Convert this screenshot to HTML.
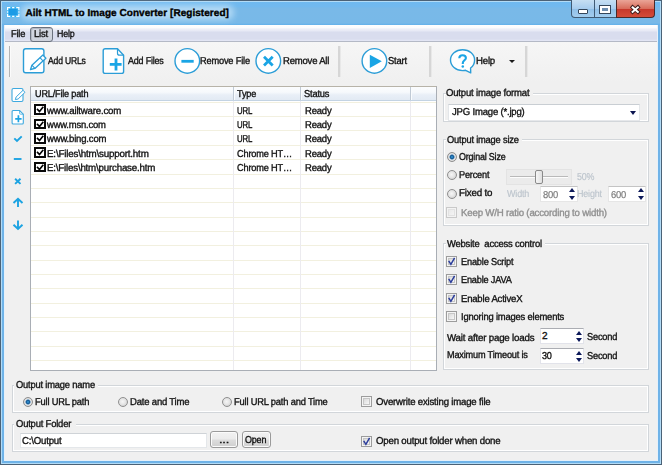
<!DOCTYPE html>
<html><head><meta charset="utf-8">
<style>
*{box-sizing:border-box}
html,body{margin:0;padding:0}
body{width:662px;height:465px;overflow:hidden;position:relative;background:#f0f0f0;font-family:"Liberation Sans",sans-serif;font-size:10px;color:#000}
.a{position:absolute}
.t{position:absolute;white-space:nowrap;line-height:12px;font-size:10px;color:#111;letter-spacing:-0.2px;transform-origin:0 0;-webkit-text-stroke:0.35px currentColor;text-rendering:geometricPrecision}
.g{position:absolute;border:1px solid #d2d6da;box-shadow:inset 1px 1px 0 #fff,inset -1px -1px 0 #fff}
.gb{position:absolute;background:#f0f0f0;height:3px}
.cb{position:absolute;width:11px;height:11px;border:1px solid #9c9c9c;background:#f4f4f4}
.cb i{position:absolute;left:1px;top:1px;right:1px;bottom:1px;border:1px solid #c6c6c6;background:linear-gradient(135deg,#dadada,#f7f7f7)}
.rd{position:absolute;width:10px;height:10px;border-radius:50%;border:1px solid #8f8f8f;background:radial-gradient(circle at 45% 45%,#f6f6f6 0,#e4e4e4 3px,#cfcfcf 5px)}
.rdo{background:radial-gradient(circle at 50% 50%,#4ab4ec 0,#1f78b8 0.9px,#17558f 1.8px,#5f93bd 2.3px,#d6dde3 2.9px,#e6e6e6 3.4px,#c4c4c4 4.2px)}
.grey{color:#8d8d8d}
.lgrey{color:#b3bcc6}
.ed{position:absolute;background:#fff;border:1px solid #e2e3ea;border-top-color:#abadb3}
.sp{position:absolute;width:0;height:0;border-left:3.5px solid transparent;border-right:3.5px solid transparent}
.spu{border-bottom:4px solid #0d1a5a}
.spd{border-top:4px solid #0d1a5a}
.btn{position:absolute;border:1px solid #9a9a9a;border-radius:3px;background:linear-gradient(#f2f2f2 0%,#ebebeb 48%,#dddddd 52%,#cfcfcf 100%);box-shadow:inset 0 0 0 1px #fbfbfb}
</style></head><body>
<div class="a" style="left:0;top:0;width:662px;height:465px;background:#6fb3e8;border:1px solid #4b6277"></div>
<div class="a" style="left:1px;top:1px;width:660px;height:463px;border:1px solid #b2dbf6"></div>
<div class="a" style="left:2px;top:2px;width:658px;height:23px;background:linear-gradient(#6fb9f0 0px,#72b9ee 5px,#79b9e8 6px,#78b9e8 21px,#62b0ea 23px)"></div>
<div class="a" style="left:4px;top:25px;width:654px;height:436px;background:#f0f0f0;border:1px solid #e6f1fa;border-top:none"></div>
<svg class="a" style="left:6px;top:6px" width="15" height="12" viewBox="0 0 15 12"><rect x="0.5" y="0.5" width="13.5" height="11" rx="2" fill="#35aef0" stroke="#68bff0"/><rect x="3" y="3" width="8.5" height="6" fill="#1a9be6"/><path d="M1.6 4.3 V1.6 H4.3 M6.1 1.6 H8.4 M10.2 1.6 H12.9 V4.3 M12.9 5.2 V6.8 M12.9 7.7 V10.4 H10.2 M8.4 10.4 H6.1 M4.3 10.4 H1.6 V7.7 M1.6 6.8 V5.2" fill="none" stroke="#fff" stroke-width="1.2"/></svg>
<div class="a" style="left:21px;top:5px;width:213px;height:15px;border-radius:7px;background:rgba(196,228,250,0.75);filter:blur(3px)"></div>
<div class="t" style="left:25.40px;top:8px;letter-spacing:0.05px;font-weight:bold;color:#000">Ailt HTML to Image Converter [Registered]</div>
<div class="a" style="left:571px;top:0;width:24px;height:18px;border:1px solid #3f5a74;border-top:none;border-radius:0 0 0 4px;background:linear-gradient(#c6dff3,#a8cdee 50%,#8fbfe7 51%,#a3cdee)"></div>
<div class="a" style="left:594px;top:0;width:23px;height:18px;border:1px solid #3f5a74;border-top:none;background:linear-gradient(#c6dff3,#a8cdee 50%,#8fbfe7 51%,#a3cdee)"></div>
<div class="a" style="left:616px;top:0;width:39px;height:18px;border:1px solid #4a2a2a;border-top:none;border-radius:0 0 4px 0;background:linear-gradient(#eaa597,#d86d5c 50%,#c5372a 51%,#d44c38)"></div>
<div class="a" style="left:578px;top:9px;width:10px;height:5px;background:#fff;border:1px solid #34465a;border-radius:1px"></div>
<div class="a" style="left:599px;top:5px;width:12px;height:9px;border:1px solid #34465a;background:#34465a"><div class="a" style="left:0;top:0;width:10px;height:7px;border:2px solid #fff;border-top-width:2px;background:#6f8fb0"></div></div>
<svg class="a" style="left:629px;top:4px" width="13" height="11" viewBox="0 0 13 11"><path d="M3.6 3.3 L8.9 7.9 M8.9 3.3 L3.6 7.9" stroke="#3a1a1a" stroke-width="3.8" stroke-linecap="square"/><path d="M3.6 3.3 L8.9 7.9 M8.9 3.3 L3.6 7.9" stroke="#fff" stroke-width="2.0" stroke-linecap="square"/></svg>
<div class="a" style="left:5px;top:25px;width:652px;height:17px;background:linear-gradient(#fefefe 0px,#fbfcfd 2.5px,#eef0f8 4px,#e6e9f5 6px,#d9ddee 7px,#d9ddee 14px,#e2e5f4 15.5px);border-bottom:1px solid #b4b9c6"></div>
<div class="a" style="left:30px;top:27px;width:23px;height:15px;border:1px solid #6b727e;border-radius:3px;background:linear-gradient(#d6dae3,#cdd2dc);box-shadow:inset 1px 1px 0 #b4b9c3"></div>
<div class="t" style="left:10.95px;top:29px;transform:scaleX(0.929);">File</div>
<div class="t" style="left:33.65px;top:29px;transform:scaleX(0.950);">List</div>
<div class="t" style="left:56.65px;top:29px;transform:scaleX(0.889);">Help</div>
<div class="a" style="left:5px;top:42px;width:652px;height:40px;background:linear-gradient(#f6f6f6,#f0f0f0)"></div>
<div class="a" style="left:9px;top:46px;width:1px;height:31px;background:#b4b4b4;box-shadow:1px 0 0 #fbfbfb"></div>
<div class="a" style="left:337.6px;top:46px;width:2px;height:31px;background:#d6d6d6;box-shadow:1px 0 0 #e8e8e8"></div>
<div class="a" style="left:429px;top:46px;width:2px;height:31px;background:#d6d6d6;box-shadow:1px 0 0 #e8e8e8"></div>
<div class="a" style="left:525px;top:46px;width:2px;height:31px;background:#d6d6d6;box-shadow:1px 0 0 #e8e8e8"></div>
<svg class="a" style="left:20px;top:45px" width="30" height="32" viewBox="0 0 30 32">
<rect x="3.5" y="3.8" width="20.4" height="24" rx="2.2" fill="#fff" stroke="#2b9dd7" stroke-width="1.4"/>
<path d="M10.5 24.5 L11.9 20.2 L22.9 10.0 L25.9 13.2 L14.9 23.4 Z" fill="#fff" stroke="#2b9dd7" stroke-width="1.3" stroke-linejoin="round"/>
<path d="M19.95 12.7 L22.95 15.9 M11.9 20.2 L14.9 23.4" stroke="#2b9dd7" stroke-width="1.1"/>
</svg>
<div class="t" style="left:47.85px;top:56px;transform:scaleX(0.857);">Add URLs</div>
<svg class="a" style="left:98px;top:45px" width="30" height="32" viewBox="0 0 30 32">
<path d="M7.2 3.8 H19.5 L25.6 10.2 V26.4 A2 2 0 0 1 23.6 28.4 H7.2 A2 2 0 0 1 5.2 26.4 V5.8 A2 2 0 0 1 7.2 3.8 Z" fill="#fff" stroke="#2b9dd7" stroke-width="1.4" stroke-linejoin="round"/>
<path d="M19.5 3.8 V8.2 A2 2 0 0 0 21.5 10.2 H25.6" fill="none" stroke="#2b9dd7" stroke-width="1.2"/>
<path d="M11.8 19.4 H23.6 M18 13.4 V25.4" stroke="#1aa5e5" stroke-width="2.8"/>
</svg>
<div class="t" style="left:128.35px;top:56px;transform:scaleX(0.893);">Add Files</div>
<svg class="a" style="left:170px;top:45px" width="34" height="32" viewBox="0 0 34 32">
<circle cx="17.3" cy="15.9" r="12.3" fill="#fff" stroke="#2b9dd7" stroke-width="1.4"/>
<path d="M11.4 16.3 H23.7" stroke="#1aa5e5" stroke-width="2.8"/>
</svg>
<div class="t" style="left:200.35px;top:56px;transform:scaleX(0.925);">Remove File</div>
<svg class="a" style="left:252px;top:45px" width="34" height="32" viewBox="0 0 34 32">
<circle cx="16.3" cy="15.9" r="12.3" fill="#fff" stroke="#2b9dd7" stroke-width="1.4"/>
<path d="M12 11.8 L20.7 20.4 M20.7 11.8 L12 20.4" stroke="#1aa5e5" stroke-width="2.8"/>
</svg>
<div class="t" style="left:282.55px;top:56px;transform:scaleX(0.951);">Remove All</div>
<svg class="a" style="left:357px;top:45px" width="34" height="32" viewBox="0 0 34 32">
<circle cx="17.4" cy="15.9" r="12.3" fill="#fff" stroke="#2b9dd7" stroke-width="1.4"/>
<path d="M12.8 9.7 L24.8 16.3 L12.8 23 Z" fill="#1aa5e5"/>
</svg>
<div class="t" style="left:387.65px;top:56px;transform:scaleX(0.938);">Start</div>
<svg class="a" style="left:445px;top:45px" width="34" height="32" viewBox="0 0 34 32">
<path d="M17.6 4.8 C24.5 4.8 29.6 9.4 29.6 15 C29.6 18.5 27.9 21.3 25.6 23 L25.7 27.9 L20.6 25.3 C19.6 25.5 18.6 25.6 17.6 25.6 C10.8 25.6 5.5 20.9 5.5 15 C5.5 9.4 10.8 4.8 17.6 4.8 Z" fill="#fff" stroke="#2b9dd7" stroke-width="1.4" stroke-linejoin="round"/>
<path d="M14.3 13.3 C14.3 11.2 15.9 10.2 17.6 10.2 C19.6 10.2 20.9 11.4 20.9 13 C20.9 15.1 17.8 15.6 17.8 18.1 V19.1" fill="none" stroke="#1aa5e5" stroke-width="2.1"/>
<circle cx="17.8" cy="21.5" r="1.25" fill="#1aa5e5"/>
</svg>
<div class="t" style="left:476.35px;top:56px;transform:scaleX(0.963);">Help</div>
<div class="a" style="left:509px;top:60px;width:0;height:0;border-left:3px solid transparent;border-right:3px solid transparent;border-top:3px solid #1a1a1a"></div>
<svg class="a" style="left:8px;top:84px" width="20" height="150" viewBox="0 0 20 150">
<rect x="4" y="4.5" width="11" height="13" rx="1.5" fill="#fff" stroke="#3ea9df" stroke-width="1.1"/>
<path d="M7.3 15.6 L8.1 13 L15 6.3 L17 8.3 L10.1 15 Z" fill="#fff" stroke="#3ea9df" stroke-width="1" stroke-linejoin="round"/>
<path d="M5.1 26.5 H11.6 L15.3 30.2 V39 A1 1 0 0 1 14.3 40 H5.1 A1 1 0 0 1 4.1 39 V27.5 A1 1 0 0 1 5.1 26.5 Z" fill="#fff" stroke="#3ea9df" stroke-width="1.1"/>
<path d="M11.6 26.5 V29.2 A1 1 0 0 0 12.6 30.2 H15.3" fill="none" stroke="#3ea9df" stroke-width="0.8"/>
<path d="M7.2 34.8 H13.6 M10.4 31.2 V38.2" stroke="#1ca3e2" stroke-width="1.7"/>
<path d="M6.3 54.3 L9 57 L13.7 52.4" fill="none" stroke="#1ca3e2" stroke-width="1.9"/>
<path d="M5.8 75 H13.5" stroke="#1ca3e2" stroke-width="1.9"/>
<path d="M7.1 94.7 L12.5 99.9 M12.5 94.7 L7.1 99.9" stroke="#1ca3e2" stroke-width="1.9"/>
<path d="M5.5 119 L10 114.8 L14.5 119 M10 115 V123" fill="none" stroke="#1ca3e2" stroke-width="1.9"/>
<path d="M5.5 140.7 L10 145 L14.5 140.7 M10 145 V136.6" fill="none" stroke="#1ca3e2" stroke-width="1.9"/>
</svg>
<div class="a" style="left:30px;top:86px;width:407px;height:285px;background:#fff;border:1px solid #a9aeb5;border-top-color:#b7b3a8"></div>
<div class="a" style="left:31px;top:87px;width:405px;height:14px;background:linear-gradient(#fbfcfe 0%,#f6f9fc 40%,#e9eff7 60%,#e2eaf4 100%);border-bottom:1px solid #c3d3e3"></div>
<div class="a" style="left:233px;top:87px;width:1px;height:13px;background:#c0cad5;box-shadow:1px 0 0 #fafcfe"></div>
<div class="a" style="left:300px;top:87px;width:1px;height:13px;background:#c0cad5;box-shadow:1px 0 0 #fafcfe"></div>
<div class="a" style="left:410px;top:87px;width:1px;height:13px;background:#c0cad5;box-shadow:1px 0 0 #fafcfe"></div>
<div class="t" style="left:34.65px;top:89px;transform:scaleX(0.910);">URL/File path</div>
<div class="t" style="left:237.45px;top:89px;transform:scaleX(0.914);">Type</div>
<div class="t" style="left:304.25px;top:89px;transform:scaleX(0.933);">Status</div>
<div class="a" style="left:31px;top:101px;width:405px;height:269px;overflow:hidden;
background:
linear-gradient(90deg,transparent 202px,#ecebef 202px,#ecebef 203px,transparent 203px,transparent 269px,#ecebef 269px,#ecebef 270px,transparent 270px,transparent 379px,#ecebef 379px,#ecebef 380px,transparent 380px),
repeating-linear-gradient(180deg,transparent 0px,transparent 0.8px,#f2f0df 0.8px,#f2f0df 1.8px,transparent 1.8px,transparent 14.35px);"></div>
<div class="a" style="left:34.4px;top:104.40px;width:11.2px;height:10.5px;border:2px solid #0a0a0a;background:#fff"></div>
<svg class="a" style="left:34.3px;top:104.40px" width="12" height="11" viewBox="0 0 12 11"><path d="M3 4.9 L5.5 7.6 L9.3 2.8" fill="none" stroke="#000" stroke-width="1.6"/></svg>
<div class="t" style="left:47.45px;top:106px;transform:scaleX(0.965);">www.ailtware.com</div>
<div class="t" style="left:237.45px;top:106px;transform:scaleX(0.785);">URL</div>
<div class="t" style="left:305.15px;top:106px;transform:scaleX(0.948);">Ready</div>
<div class="a" style="left:34.4px;top:118.75px;width:11.2px;height:10.5px;border:2px solid #0a0a0a;background:#fff"></div>
<svg class="a" style="left:34.3px;top:118.75px" width="12" height="11" viewBox="0 0 12 11"><path d="M3 4.9 L5.5 7.6 L9.3 2.8" fill="none" stroke="#000" stroke-width="1.6"/></svg>
<div class="t" style="left:47.45px;top:120px;transform:scaleX(0.944);">www.msn.com</div>
<div class="t" style="left:237.45px;top:120px;transform:scaleX(0.785);">URL</div>
<div class="t" style="left:305.15px;top:120px;transform:scaleX(0.948);">Ready</div>
<div class="a" style="left:34.4px;top:133.10px;width:11.2px;height:10.5px;border:2px solid #0a0a0a;background:#fff"></div>
<svg class="a" style="left:34.3px;top:133.10px" width="12" height="11" viewBox="0 0 12 11"><path d="M3 4.9 L5.5 7.6 L9.3 2.8" fill="none" stroke="#000" stroke-width="1.6"/></svg>
<div class="t" style="left:47.45px;top:134px;transform:scaleX(0.955);">www.bing.com</div>
<div class="t" style="left:237.45px;top:134px;transform:scaleX(0.785);">URL</div>
<div class="t" style="left:305.15px;top:134px;transform:scaleX(0.948);">Ready</div>
<div class="a" style="left:34.4px;top:147.45px;width:11.2px;height:10.5px;border:2px solid #0a0a0a;background:#fff"></div>
<svg class="a" style="left:34.3px;top:147.45px" width="12" height="11" viewBox="0 0 12 11"><path d="M3 4.9 L5.5 7.6 L9.3 2.8" fill="none" stroke="#000" stroke-width="1.6"/></svg>
<div class="t" style="left:47.45px;top:149px;transform:scaleX(0.981);">E:\Files\htm\support.htm</div>
<div class="t" style="left:237.45px;top:149px;transform:scaleX(0.920);">Chrome HT&hellip;</div>
<div class="t" style="left:305.15px;top:149px;transform:scaleX(0.948);">Ready</div>
<div class="a" style="left:34.4px;top:161.80px;width:11.2px;height:10.5px;border:2px solid #0a0a0a;background:#fff"></div>
<svg class="a" style="left:34.3px;top:161.80px" width="12" height="11" viewBox="0 0 12 11"><path d="M3 4.9 L5.5 7.6 L9.3 2.8" fill="none" stroke="#000" stroke-width="1.6"/></svg>
<div class="t" style="left:47.45px;top:163px;transform:scaleX(0.973);">E:\Files\htm\purchase.htm</div>
<div class="t" style="left:237.45px;top:163px;transform:scaleX(0.920);">Chrome HT&hellip;</div>
<div class="t" style="left:305.15px;top:163px;transform:scaleX(0.948);">Ready</div>
<div class="g" style="left:443px;top:93px;width:206px;height:29px"></div>
<div class="gb" style="left:446px;top:92px;width:87px"></div>
<div class="t" style="left:446.25px;top:88px;transform:scaleX(0.955);">Output image format</div>
<div class="ed" style="left:448px;top:104px;width:192px;height:17px;border-color:#c9ced3 #e3e6e9 #e6e8eb #e3e6e9"></div>
<div class="t" style="left:451.95px;top:107px;transform:scaleX(0.954);">JPG Image (*.jpg)</div>
<div class="a" style="left:630px;top:111px;width:0;height:0;border-left:3.5px solid transparent;border-right:3.5px solid transparent;border-top:4px solid #0b1450"></div>
<div class="g" style="left:443px;top:139px;width:206px;height:87px"></div>
<div class="gb" style="left:446px;top:138px;width:76px"></div>
<div class="t" style="left:447.15px;top:135px;transform:scaleX(0.929);">Output image size</div>
<div class="rd rdo" style="left:447px;top:152px"></div>
<div class="t" style="left:459.45px;top:152px;transform:scaleX(0.892);">Orginal Size</div>
<div class="rd" style="left:447px;top:170.3px"></div>
<div class="t" style="left:459.45px;top:170px;transform:scaleX(0.915);">Percent</div>
<div class="rd" style="left:447px;top:189px"></div>
<div class="t" style="left:459.45px;top:188px;transform:scaleX(0.979);">Fixed to</div>
<div class="cb" style="left:446.3px;top:207.3px;border-color:#c9c9c9;background:#f3f3f3"><i style="border-color:#e2e2e2;background:linear-gradient(135deg,#e9e9e9,#f4f4f4)"></i></div>
<div class="t" style="left:460.55px;top:208px;transform:scaleX(0.967);color:#8f8f8f">Keep W/H ratio (according to width)</div>
<div class="a" style="left:506px;top:169px;width:66px;height:16px;background:#ebebeb;border:1px solid #e3e3e3"></div>
<div class="a" style="left:510px;top:176px;width:58px;height:2px;border-top:1px solid #b9b9b9;border-bottom:1px solid #fdfdfd"></div>
<div class="a" style="left:535px;top:170px;width:8px;height:14px;border:1px solid #8a8a8a;border-radius:2px;background:linear-gradient(90deg,#f6f6f6,#e0e0e0)"></div>
<div class="t" style="left:576.55px;top:172px;transform:scaleX(0.890);color:#bcc4cc;-webkit-text-stroke:0.15px #bcc4cc">50%</div>
<div class="t" style="left:507.35px;top:189px;transform:scaleX(0.900);color:#bcc4cc;-webkit-text-stroke:0.15px #bcc4cc">Width</div>
<div class="ed" style="left:540px;top:186px;width:38px;height:16px;border-color:#c4c4c4 #e6e6e6 #e6e6e6 #e6e6e6"></div>
<div class="t" style="left:542.65px;top:190px;transform:scaleX(0.938);color:#7c7c7c;-webkit-text-stroke:0.2px #7c7c7c">800</div>
<div class="sp spu" style="left:569.3px;top:188px"></div>
<div class="sp spd" style="left:569px;top:196px"></div>
<div class="t" style="left:577.45px;top:189px;transform:scaleX(0.896);color:#bcc4cc;-webkit-text-stroke:0.15px #bcc4cc">Height</div>
<div class="ed" style="left:608px;top:186px;width:38px;height:16px;border-color:#c4c4c4 #e6e6e6 #e6e6e6 #e6e6e6"></div>
<div class="t" style="left:611.05px;top:190px;transform:scaleX(0.938);color:#7c7c7c;-webkit-text-stroke:0.2px #7c7c7c">600</div>
<div class="sp spu" style="left:637.5px;top:188px"></div>
<div class="sp spd" style="left:637.5px;top:196px"></div>
<div class="g" style="left:443px;top:243px;width:206px;height:127px"></div>
<div class="gb" style="left:446px;top:242px;width:99px"></div>
<div class="t" style="left:446.75px;top:239px;transform:scaleX(0.941);">Website&nbsp; access control</div>
<div class="cb" style="left:446.4px;top:255.80px"><i></i></div>
<svg class="a" style="left:446.4px;top:255.80px" width="11" height="11" viewBox="0 0 11 11"><path d="M2.7 4.8 L4.9 8.3 L8.6 1.8" fill="none" stroke="#2c3e9c" stroke-width="1.5"/></svg>
<div class="t" style="left:460.85px;top:257px;transform:scaleX(0.921);">Enable Script</div>
<div class="cb" style="left:446.4px;top:274.00px"><i></i></div>
<svg class="a" style="left:446.4px;top:274.00px" width="11" height="11" viewBox="0 0 11 11"><path d="M2.7 4.8 L4.9 8.3 L8.6 1.8" fill="none" stroke="#2c3e9c" stroke-width="1.5"/></svg>
<div class="t" style="left:460.85px;top:275px;transform:scaleX(0.916);">Enable JAVA</div>
<div class="cb" style="left:446.4px;top:292.60px"><i></i></div>
<svg class="a" style="left:446.4px;top:292.60px" width="11" height="11" viewBox="0 0 11 11"><path d="M2.7 4.8 L4.9 8.3 L8.6 1.8" fill="none" stroke="#2c3e9c" stroke-width="1.5"/></svg>
<div class="t" style="left:460.85px;top:294px;transform:scaleX(0.952);">Enable ActiveX</div>
<div class="cb" style="left:446.4px;top:310.70px"><i></i></div>
<div class="t" style="left:460.85px;top:312px;transform:scaleX(0.940);">Ignoring images elements</div>
<div class="t" style="left:446.65px;top:333px;transform:scaleX(0.971);">Wait after page loads</div>
<div class="ed" style="left:540.4px;top:327.6px;width:44px;height:16px"></div>
<div class="t" style="left:542.05px;top:331px;transform:scaleX(1.000);">2</div>
<div class="sp spu" style="left:575.5px;top:330.5px"></div>
<div class="sp spd" style="left:575.5px;top:338px"></div>
<div class="t" style="left:587.45px;top:332px;transform:scaleX(0.924);">Second</div>
<div class="t" style="left:446.65px;top:350px;transform:scaleX(0.916);">Maximum Timeout is</div>
<div class="ed" style="left:540.4px;top:347.9px;width:44px;height:16px"></div>
<div class="t" style="left:542.05px;top:351px;transform:scaleX(0.909);">30</div>
<div class="sp spu" style="left:575.5px;top:350.5px"></div>
<div class="sp spd" style="left:575.5px;top:358px"></div>
<div class="t" style="left:587.45px;top:351px;transform:scaleX(0.924);">Second</div>
<div class="g" style="left:12px;top:385px;width:637px;height:28px"></div>
<div class="gb" style="left:14px;top:384px;width:84px"></div>
<div class="t" style="left:15.65px;top:380px;transform:scaleX(0.935);">Output image name</div>
<div class="rd rdo" style="left:23px;top:397px"></div>
<div class="t" style="left:35.45px;top:397px;transform:scaleX(0.933);">Full URL path</div>
<div class="rd" style="left:118px;top:396.5px"></div>
<div class="t" style="left:130.45px;top:397px;transform:scaleX(0.951);">Date and Time</div>
<div class="rd" style="left:221.5px;top:396.5px"></div>
<div class="t" style="left:233.85px;top:397px;transform:scaleX(0.933);">Full URL path and Time</div>
<div class="cb" style="left:361.2px;top:396.3px"><i></i></div>
<div class="t" style="left:375.55px;top:397px;transform:scaleX(0.960);">Overwrite existing image file</div>
<div class="g" style="left:12px;top:424px;width:637px;height:28px"></div>
<div class="gb" style="left:14px;top:423px;width:62px"></div>
<div class="t" style="left:15.65px;top:419px;transform:scaleX(0.942);">Output Folder</div>
<div class="ed" style="left:19.5px;top:433.4px;width:187px;height:15px;border-color:#cfd3d7 #e4e7ea #e4e7ea #e4e7ea"></div>
<div class="t" style="left:21.75px;top:436px;transform:scaleX(0.964);">C:\Output</div>
<div class="btn" style="left:210px;top:431px;width:28px;height:17px"></div>
<div class="t" style="left:218.95px;top:435px;transform:scaleX(1.286);">...</div>
<div class="btn" style="left:241.5px;top:431px;width:29px;height:17px"></div>
<div class="t" style="left:244.65px;top:435px;transform:scaleX(0.896);">Open</div>
<div class="cb" style="left:361.2px;top:435.7px"><i></i></div>
<svg class="a" style="left:361.2px;top:435.7px" width="11" height="11" viewBox="0 0 11 11"><path d="M2.7 4.8 L4.9 8.3 L8.6 1.8" fill="none" stroke="#2c3e9c" stroke-width="1.5"/></svg>
<div class="t" style="left:375.55px;top:436px;transform:scaleX(0.965);">Open output folder when done</div>
</body></html>
